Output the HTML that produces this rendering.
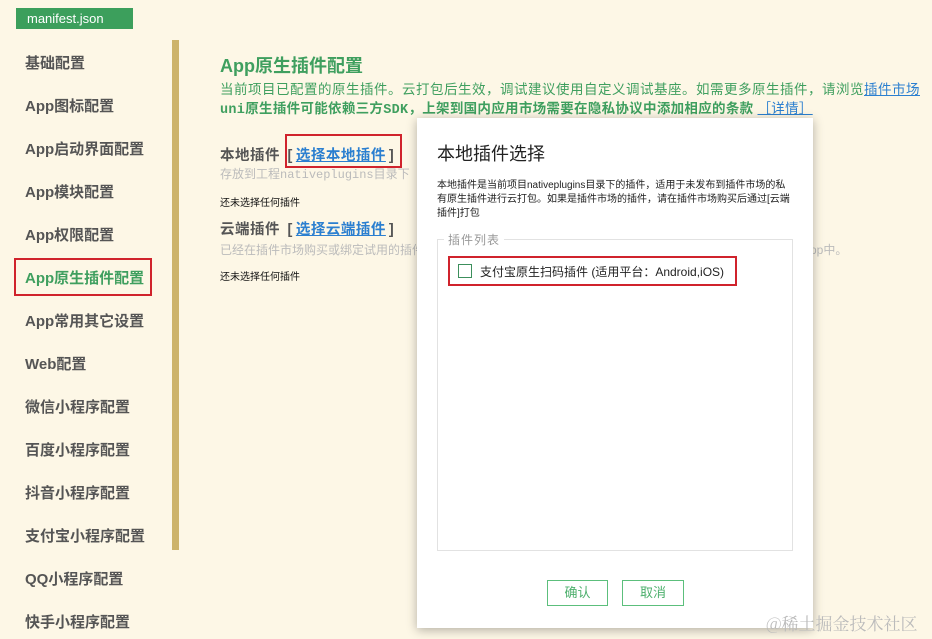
<!DOCTYPE html>
<html><head><meta charset="utf-8"><style>
*{margin:0;padding:0;box-sizing:border-box}
body{width:932px;height:639px;overflow:hidden;background:#fdf7e6;font-family:"Liberation Sans","Noto Sans CJK SC",sans-serif;position:relative;color:#333}
.a{position:absolute;white-space:nowrap}
.tab{left:16px;top:8px;width:117px;height:21px;background:#3c9f5c;color:#fff;font-size:13px;line-height:21px;padding-left:11px}
.side{left:25px;font-size:15px;font-weight:bold;color:#555}
.bar{left:172px;top:40px;width:7px;height:510px;background:#cdb36a}
.g{color:#3f9f5f}
.red{border:2px solid #d0232c}
.lk{color:#2b7fd0;text-decoration:underline}
.m{font-family:"Liberation Mono","Noto Sans CJK SC",monospace}
.br{display:inline-block;margin:0 3px}
</style></head><body>
<div class="a tab">manifest.json</div>
<div class="a bar"></div>
<div class="a side" style="top:52px">基础配置</div>
<div class="a side" style="top:95px">App图标配置</div>
<div class="a side" style="top:138px">App启动界面配置</div>
<div class="a side" style="top:181px">App模块配置</div>
<div class="a side" style="top:224px">App权限配置</div>
<div class="a red" style="left:14px;top:258px;width:138px;height:38px"></div>
<div class="a side g" style="top:267px">App原生插件配置</div>
<div class="a side" style="top:310px">App常用其它设置</div>
<div class="a side" style="top:353px">Web配置</div>
<div class="a side" style="top:396px">微信小程序配置</div>
<div class="a side" style="top:439px">百度小程序配置</div>
<div class="a side" style="top:482px">抖音小程序配置</div>
<div class="a side" style="top:525px">支付宝小程序配置</div>
<div class="a side" style="top:568px">QQ小程序配置</div>
<div class="a side" style="top:611px">快手小程序配置</div>

<div class="a g" style="left:220px;top:52px;font-size:18px;font-weight:bold">App原生插件配置</div>
<div class="a g" style="left:220px;top:78px;font-size:13.5px;letter-spacing:0.5px">当前项目已配置的原生插件。云打包后生效，调试建议使用自定义调试基座。如需更多原生插件，请浏览<span class="lk" style="color:#2b7fd0">插件市场</span></div>
<div class="a g" style="left:220px;top:97px;font-size:13.5px;font-weight:bold;letter-spacing:0.3px"><span class="m">uni</span>原生插件可能依赖三方<span class="m">SDK</span>，上架到国内应用市场需要在隐私协议中添加相应的条款 <span class="lk" style="font-weight:normal">［详情］</span></div>
<div class="a" style="left:220px;top:144px;font-size:14.5px;font-weight:bold;color:#555;letter-spacing:0.5px">本地插件 <span class="br">[</span><span class="lk">选择本地插件</span><span class="br">]</span></div>
<div class="a red" style="left:285px;top:134px;width:117px;height:34px"></div>
<div class="a" style="left:220px;top:165px;font-size:12px;color:#bbb">存放到工程<span class="m">nativeplugins</span>目录下</div>
<div class="a" style="left:220px;top:194px;font-size:10px;color:#111">还未选择任何插件</div>
<div class="a" style="left:220px;top:218px;font-size:14.5px;font-weight:bold;color:#555;letter-spacing:0.5px">云端插件 <span class="br">[</span><span class="lk">选择云端插件</span><span class="br">]</span></div>
<div class="a" style="left:220px;top:241px;font-size:12px;color:#bbb">已经在插件市场购买或绑定试用的插件</div>
<div class="a" style="left:810px;top:241px;font-size:12px;color:#bbb">pp中。</div>
<div class="a" style="left:220px;top:268px;font-size:10px;color:#111">还未选择任何插件</div>

<div class="a" style="left:417px;top:118px;width:396px;height:510px;background:#fff;box-shadow:0 2px 10px rgba(0,0,0,.3)"></div>
<div class="a" style="left:437px;top:140px;font-size:18px;color:#222">本地插件选择</div>
<div class="a" style="left:437px;top:179px;font-size:10px;line-height:14px;color:#222;white-space:normal;width:358px">本地插件是当前项目nativeplugins目录下的插件，适用于未发布到插件市场的私有原生插件进行云打包。如果是插件市场的插件，请在插件市场购买后通过[云端插件]打包</div>
<div class="a" style="left:437px;top:239px;width:356px;height:312px;border:1px solid #e2e2e2"></div>
<div class="a" style="left:444px;top:231px;font-size:12px;color:#999;background:#fff;padding:0 4px;letter-spacing:1px">插件列表</div>
<div class="a red" style="left:448px;top:256px;width:289px;height:30px"></div>
<div class="a" style="left:458px;top:264px;width:14px;height:14px;border:1px solid #3c8f5c"></div>
<div class="a" style="left:480px;top:263px;font-size:12px;color:#222">支付宝原生扫码插件 (适用平台：Android,iOS)</div>
<div class="a" style="left:547px;top:580px;width:61px;height:26px;border:1px solid #5cbf7c;color:#4caf6c;font-size:13px;text-align:center;line-height:24px">确认</div>
<div class="a" style="left:622px;top:580px;width:62px;height:26px;border:1px solid #5cbf7c;color:#4caf6c;font-size:13px;text-align:center;line-height:24px">取消</div>
<div class="a" style="left:766px;top:610px;font-size:17px;color:#bbb;font-family:'Noto Serif CJK SC',serif">@稀土掘金技术社区</div>
</body></html>
